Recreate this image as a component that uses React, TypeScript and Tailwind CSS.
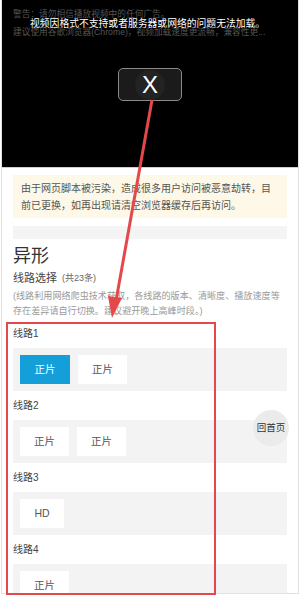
import React from "react"

const lines = [
  { name: "线路1", items: ["正片", "正片"], active: 0 },
  { name: "线路2", items: ["正片", "正片"], active: -1 },
  { name: "线路3", items: ["HD"], active: -1 },
  { name: "线路4", items: ["正片"], active: -1 },
]

function LineGroup({ name, items, active }: { name: string; items: string[]; active: number }) {
  return (
    <div className="mt-[8px] first:mt-[6px]">
      <div className="h-[14px] text-[10px] leading-[14px] text-[#444]">{name}</div>
      <div className="mt-[7px] flex h-[43px] items-center gap-[8px] bg-[#f3f3f3] pl-[7px]">
        {items.map((it, i) => (
          <div
            key={i}
            className={
              i === active
                ? "flex h-[29px] w-[50px] items-center justify-center bg-[#149fd8] text-[10.5px] text-white"
                : it === "HD"
                ? "flex h-[29px] w-[44px] items-center justify-center bg-white text-[10.5px] text-[#555]"
                : "flex h-[29px] w-[49px] items-center justify-center bg-white text-[10.5px] text-[#555]"
            }
          >
            {it}
          </div>
        ))}
      </div>
    </div>
  )
}

export default function App() {
  return (
    <div className="relative h-[596px] w-[300px] overflow-hidden bg-white px-[1px] font-['Liberation_Sans','Noto_Sans_CJK_SC',sans-serif]">
      <div className="h-[594px] overflow-hidden border-x border-b border-[#e2e2e2]">
        {/* video area */}
        <div className="flex h-[167px] flex-col bg-black pt-[10px]">
          <div className="flex flex-col pl-[11px] whitespace-nowrap">
            <p className="h-[9px] text-[8.7px] leading-[9px] text-[#555]">警告：请勿相信播放视频中的任何广告。</p>
            <p className="h-[9px] pl-[17px] text-[9.8px] leading-[9px] text-white">
              视频因格式不支持或者服务器或网络的问题无法加载。
            </p>
            <p className="h-[9px] text-[8.7px] leading-[9px] text-[#555]">
              建议使用谷歌浏览器(Chrome)，视频加载速度更流畅，兼容性更...
            </p>
          </div>
          <div className="mt-[31px] flex justify-center">
            <div className="flex h-[33px] w-[64px] items-center justify-center rounded-[5px] border border-[#8a8a8a] bg-[#1b1b1b]">
              <div className="flex h-[30px] w-[30px] items-center justify-center rounded-full bg-[#232323] text-[24px] leading-none text-white">
                X
              </div>
            </div>
          </div>
        </div>
        <div className="h-px bg-[#cfcfcf]" />

        <div className="px-[11px]">
          {/* notice */}
          <div className="mt-[7px] flex h-[43px] items-center bg-[#fdf8e7] px-[8px] text-[10px] leading-[17px] text-[#555]">
            由于网页脚本被污染，造成很多用户访问被恶意劫转，目前已更换，如再出现请清空浏览器缓存后再访问。
          </div>
          <div className="mt-[8px] h-[13px] bg-[#f4f4f4]" />

          <h1 className="mt-[2px] h-[30px] text-[18px] leading-[30px] font-normal text-[#333]">异形</h1>
          <div className="flex h-[14px] items-center gap-[5px] text-[11px] leading-[14px] text-[#444]">
            <span>线路选择</span>
            <span className="text-[9px] text-[#666]">(共23条)</span>
          </div>
          <p className="mt-[4px] text-[9.1px] leading-[15px] text-[#9a9a9a]">
            (线路利用网络爬虫技术获取，各线路的版本、清晰度、播放速度等存在差异请自行切换。建议避开晚上高峰时段。)
          </p>

          {lines.map((l) => (
            <LineGroup key={l.name} {...l} />
          ))}
        </div>
      </div>

      {/* back to home */}
      <div className="absolute left-[253px] top-[410px] flex h-[36px] w-[36px] items-center justify-center rounded-full bg-[#ebebeb] text-[9.5px] text-[#333]">
        回首页
      </div>

      {/* red annotation */}
      <div className="pointer-events-none absolute left-[6px] top-[322px] h-[273px] w-[210px] border-[2.5px] border-[#e5484a]" />
      <svg className="pointer-events-none absolute left-0 top-0" width="300" height="596" viewBox="0 0 300 596">
        <line x1="152" y1="100" x2="116.5" y2="298" stroke="#e5484a" strokeWidth="3" />
        <polygon points="112,318 108,296 122,298" fill="#e5484a" />
      </svg>
    </div>
  )
}
